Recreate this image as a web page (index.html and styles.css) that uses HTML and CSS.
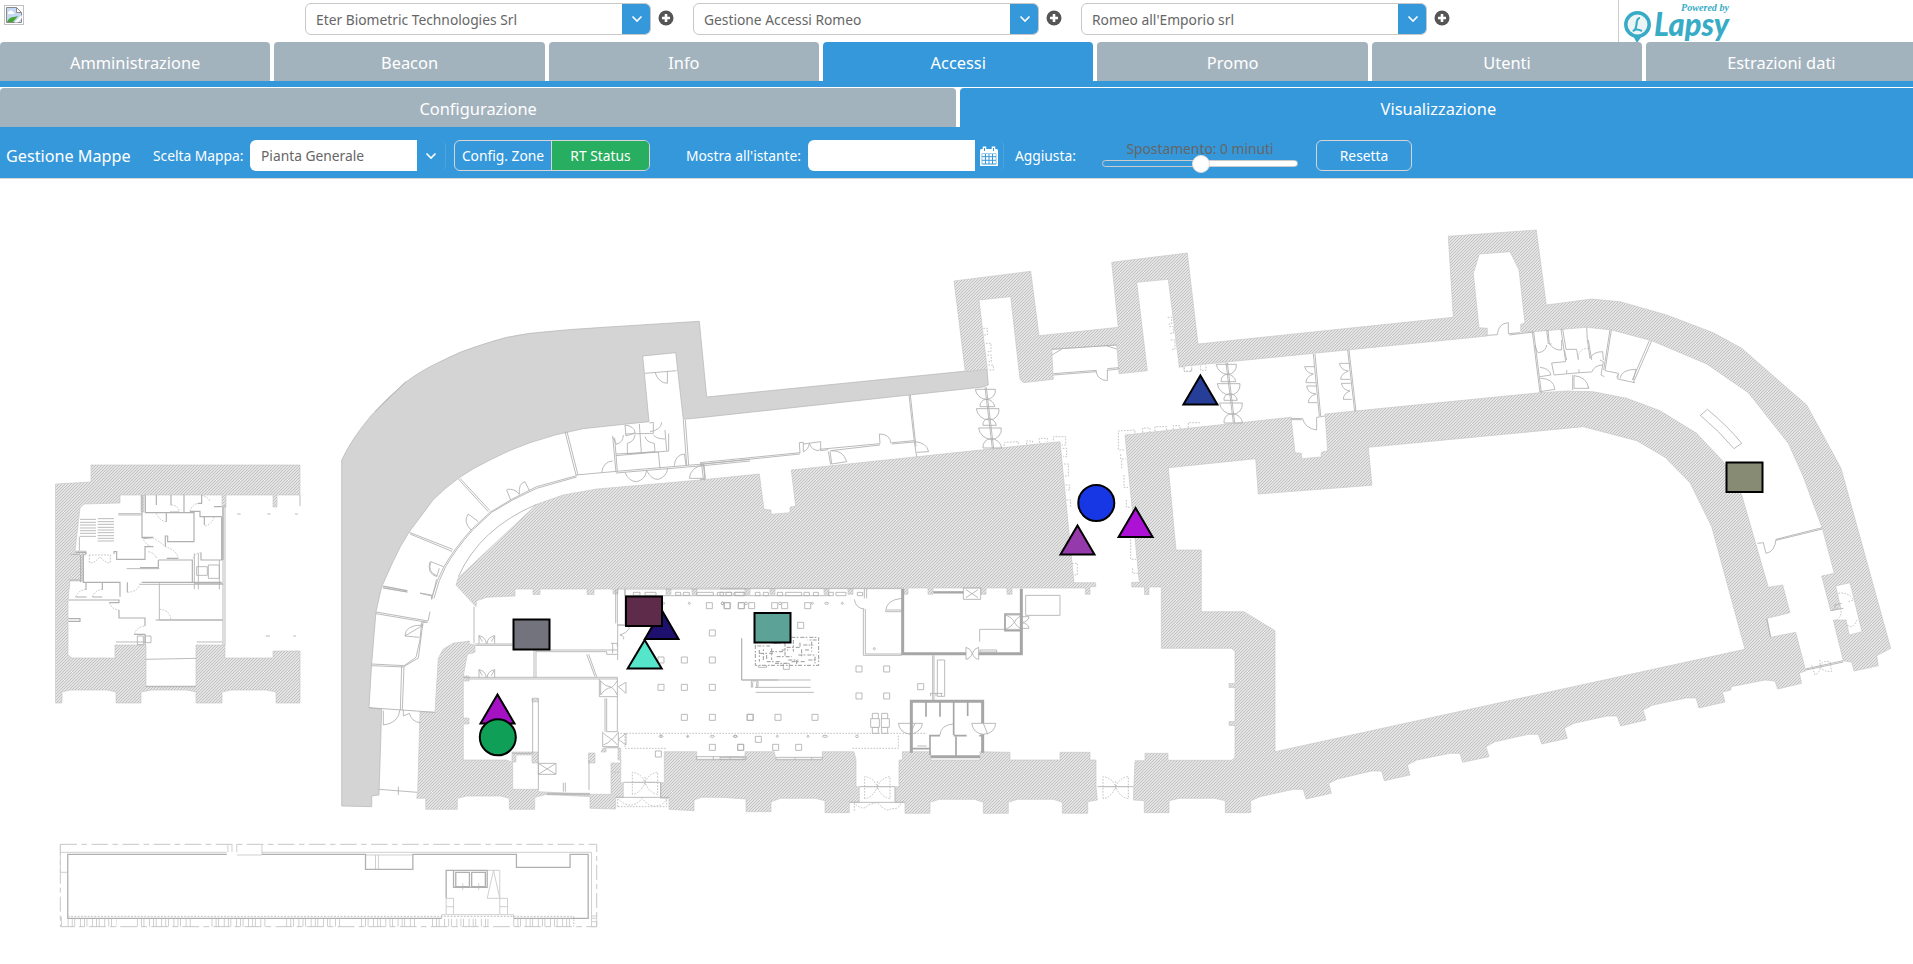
FILE: index.html
```html
<!DOCTYPE html>
<html lang="it">
<head>
<meta charset="utf-8">
<title>Gestione Mappe</title>
<link rel="stylesheet" href="styles.css">
</head>
<body>
<header class="top">
  <div class="brand">
    <svg width="20" height="20" viewBox="0 0 20 20"><rect x=".5" y=".5" width="19" height="19" fill="#fff" stroke="#c0c0c0"/><path d="M2.500 2.500H12.500L17.500 7.500V17.500H2.500Z" fill="#c5d8f5" stroke="#8b8b8b"/><path d="M12.500 2.500V7.500H17.500Z" fill="#fff" stroke="#8b8b8b"/><path d="M4 8Q4 6 6 6Q8 4 9 7Q11 7 10 9H4Z" fill="#fff"/><path d="M3 17Q5 12 10 12L14 11L9 17Z" fill="#48a532"/><path d="M17.500 10L10.500 17.500H13.500L18 13Z" fill="#fff"/></svg>
  </div>
  <div class="pickers">
    <div class="picker"><div class="combo"><span>Eter Biometric Technologies Srl</span><i><svg width="12" height="8" viewBox="0 0 12 8"><path d="M1.500 1.500L6 6L10.500 1.500"/></svg></i></div><svg class="plus" width="16" height="16" viewBox="0 0 16 16"><circle cx="8" cy="8" r="7.500"/><path d="M8 4V12M4 8H12"/></svg></div>
    <div class="picker"><div class="combo"><span>Gestione Accessi Romeo</span><i><svg width="12" height="8" viewBox="0 0 12 8"><path d="M1.500 1.500L6 6L10.500 1.500"/></svg></i></div><svg class="plus" width="16" height="16" viewBox="0 0 16 16"><circle cx="8" cy="8" r="7.500"/><path d="M8 4V12M4 8H12"/></svg></div>
    <div class="picker"><div class="combo"><span>Romeo all'Emporio srl</span><i><svg width="12" height="8" viewBox="0 0 12 8"><path d="M1.500 1.500L6 6L10.500 1.500"/></svg></i></div><svg class="plus" width="16" height="16" viewBox="0 0 16 16"><circle cx="8" cy="8" r="7.500"/><path d="M8 4V12M4 8H12"/></svg></div>
  </div>
  <div class="vendor">
    <svg width="110" height="42" viewBox="0 0 110 42">
      <path d="M8 34L13 43L20 33Z" fill="#38abc6"/><circle cx="13.500" cy="24.500" r="11.700" fill="#edf4f5" stroke="#38abc6" stroke-width="3.500"/>
      <path d="M16 18Q13 18 12.500 24T9 31Q12 28 18 31" fill="none" stroke="#38abc6" stroke-width="2.200"/>
      <text class="logo-name" x="30" y="35.500" textLength="75" lengthAdjust="spacingAndGlyphs">Lapsy</text>
      <text class="logo-by" x="57" y="11" textLength="48" lengthAdjust="spacingAndGlyphs">Powered by</text>
    </svg>
  </div>
</header>
<nav class="tabs"><a>Amministrazione</a><a>Beacon</a><a>Info</a><a class="on">Accessi</a><a>Promo</a><a>Utenti</a><a>Estrazioni dati</a></nav>
<nav class="tabs sub"><a>Configurazione</a><a class="on">Visualizzazione</a></nav>
<section class="tools">
  <h1>Gestione Mappe</h1>
  <label class="l-map">Scelta Mappa:</label>
  <div class="field f-map"><span>Pianta Generale</span><i><svg width="12" height="8" viewBox="0 0 12 8"><path d="M1.500 1.500L6 6L10.500 1.500"/></svg></i></div>
  <div class="switch"><b>Config. Zone</b><b class="go">RT Status</b></div>
  <label class="l-time">Mostra all'istante:</label>
  <div class="field f-time"><span></span><i><svg width="18" height="20" viewBox="0 0 18 20"><rect x="0" y="3" width="18" height="17" rx="1.500" fill="#fff" stroke="none"/><path d="M4.500 .500V5M13.500 .500V5" stroke="#fff" stroke-width="3.500"/><path d="M4.500 2V5M13.500 2V5M1.500 7.500H16.500M1.500 10.700H16.500M1.500 14.300H16.500M1.500 18H16.500M1.700 7.500V18M5.500 7.500V18M9 7.500V18M12.500 7.500V18M16.300 7.500V18" stroke="#3598db" stroke-width="1"/><path d="M0 7H18M1 7V19.500H17V7" stroke-width="1.200"/></svg></i></div>
  <label class="l-adj">Aggiusta:</label>
  <div class="slider"><span>Spostamento: 0 minuti</span><div class="track"><div class="knob"></div></div></div>
  <div class="reset">Resetta</div>
</section>
<main class="map">
<svg width="1913" height="785" viewBox="0 179 1913 785">
<defs>
  <pattern id="h" width="3" height="3" patternUnits="userSpaceOnUse"><rect width="3" height="3" fill="#e4e4e4"/><path d="M-1 1L1 -1M0 3L3 0M2 4L4 2" stroke="#bababa" stroke-width=".8"/></pattern>
  <g id="w"><path d="M-30 0A30 30 0 0 0 30 0ZM-22 52A22 22 0 0 1 22 52ZM-34 58A34 34 0 0 0 34 58ZM-20 108A20 20 0 0 1 20 108ZM-34 116A34 34 0 0 0 34 116ZM-28 176A28 28 0 0 1 28 176Z"/></g>
  <g id="x"><path d="M0 0H52V34H0ZM8 5L44 29M44 5L8 29"/></g>
  <g id="q"><path d="M0 0H18V18H0Z"/></g>
  <g id="v"><path d="M-38 36V-30Q-12 -28 0 0Q12 -28 38 -30V36Q12 32 0 0Q-12 32 -38 36M-38 0H38M0 -16V8"/></g>
  <g id="b"><path d="M2 0V-24Q22 -20 24 0M49 0V-24Q28 -20 26 0M2 -24L12 -6M49 -24L39 -6"/></g>
</defs>

<!-- solid ground -->
<path class="solid" d="M341.700 460Q352 438 371.700 415Q387 398 405 382.700Q420 371 440 361.700Q460 351 483 344.300Q506 336 530 333.300Q570 329 613 326.700L699.300 321.300L706.700 397L987 369L988.300 385L983 387L700 417.700L683.300 419.300L675.700 352.700L642.700 356L649 421.700L626.700 424L583 428.700Q555 434 530 442.700Q509 450 490 460Q473 468 458.300 478.300Q445 488 433 500L409 532.300Q400 546 393 561.700L381.700 586.700L376 611.700L371.700 663L369 707.700L381.700 709.300L379 795L371.700 796V806.700L341.700 806Z"/>

<!-- hatched masonry -->
<g class="mass">
<path d="M536.700 504.300L563 495L597 489L663 483.300L700 480L759.300 474L764 509.300L771 510V514.300L790 512.700V507.300L795.700 506L791.300 470L1060 441.700L1074 582.700H1095.700V586.700H1090V594.300H1085.300V588H1012V594.300H1007V588H986V594.300H981V588H933V594.300H928V588H908V594.300H903V588H853V594.300H848V588H829V594.300H824V588H775V594.300H770V588H750V594.300H745V588H697V594.300H692V588H671V594.300H666V588H618V594H613V589H594V594.500H587V589H540V594.500H533V589H515V596L486.700 597.300L476.700 600.700L476 606.700L466.700 596.700L456 585L458.300 577.700Z"/>
<path d="M475 652.300V645L469.300 644V641L453 643.300L443 649.300L438.300 658.300L435 712.300L420 711.700L417.700 792.300L416.700 798.300H425.700V809.300H457.300V798.300L466.700 796H500.700L509.300 798.300V809.300H534.700V797.300L546.700 794.300L590 796.700V808.300L615.700 809V797.300H623.300V782.700H620.700V772.300H611V794.300H590L538.300 791.700V789.300H512.700V762.300L506.700 760H463.300V724H469V718H463.300V681H469V676H463.300L467.300 654.300Z"/>
<path d="M601 752H606V747H618V760H620.700V763H611V772H620.700V748H603ZM588.500 753H595V763H588.500ZM532 698H538V702H532ZM512 752H538V763H532V755H516V762H512Z"/>
<path d="M664.300 751.700H696.700V760H745V751.700H774.300L776 760H822.300V751.700H854L856 760V786.700H859.300V802.300H849.300V812.700H825V800.700L815 798.300H780.700L771 801.700V811.700H746V799L720 797.300H701.700L694 800V810.700L669 809.300V798.300H660.700V782.700H664.300Z"/>
<path d="M902.300 751.700H930.700V760H980V751.700L1010 752.300V760H1060V752.300H1090V760H1096V786.700L1097.300 800L1087.700 801.700V813.300H1062.300V802.300L1053.300 799.300H1017.700L1008.300 802.300V813.300H983.300V802.300L974.300 799.300H939.300L930 802.300V813.300H905V802.300H895.700V786.700H899V760H902.300Z"/>
<path fill-rule="evenodd" d="M1125 435L1291 417.300L1295 452.700L1301.300 453.300L1302 458.700L1321 457L1321.300 452.300L1327.700 450.700L1325 414L1540 392.700L1566.700 391L1593.300 391.700L1626.700 398.300L1660 410.700L1696.700 433.300L1723.300 461.700L1741.700 495L1768.300 587.300L1782.700 585L1790 612.700L1767.300 618.300L1770.700 637.300L1795.700 632.300L1805.700 670.700L1799.300 673.300L1801.700 683.300L1777.700 689L1775 681L1765 680L1731 686.700V690L1722.300 692L1725 702L1699 708L1696 698H1686L1653 705L1643 710L1646 720L1620.700 726L1617 716H1607L1574 723.300L1564.300 728.300L1567.300 738.300L1541.700 744L1538.300 734.300H1528.300L1495 741.700L1486 746.700L1489 756.700L1462.700 762.300L1460 753.300H1450L1416.700 760L1407.300 765L1410 775L1384.300 780.700L1381.700 771H1371.700L1337.700 779L1328.700 783.300L1331.300 793.300L1306 799L1303.300 789.300H1293.300L1260 796.700L1250.700 800.700V812.700H1225.300V800.700L1214.300 798.300H1179.300L1169 800.700V812.700H1144.300V800.700L1133.300 800L1135 760.700H1145V753.300H1168V760.300H1231.700L1235 757.300V725.500H1229V721.500H1235V687.500H1229V683.500H1235V651.700L1231.700 648.300H1161.300V587H1149V594.500H1144.500V587H1131.700V582.300H1139.300ZM1168.300 467.700L1176 550H1201.300V611.700H1244L1275 630.700V751.700L1745 649.300L1711.700 526.700L1690 482.700L1665 457.300L1636.700 440.700L1583.300 426.700L1368.300 447.300L1372 485.300L1258.300 494L1255.700 458.700Z"/>
<path d="M1179.300 366.700L1168.300 279.300L1136.700 282.300L1147.300 370.700L1119 373.700L1116.700 345L1051.700 349.300L1053.300 379.300L1023.300 382.700L1020 379.300L1010.700 296.700L979 300L987.300 369.300L965.300 371.700L954 281L1030.700 271.300L1039 335.700L1118.300 327.300L1111.700 262.300L1187.300 253L1198 344L1453.300 317.300L1448.300 236.300L1536.300 230L1546.300 305L1591.700 299L1620 301.700L1666.700 315L1713.300 332.700L1741.700 348.300L1806.700 405L1841 468.300L1890.700 648.300L1876.700 655.700L1878.300 665.700L1854 671L1851.700 662.300L1843.300 660.700L1833.300 620H1846L1849.300 635L1862 631.700L1850 582.700L1835.700 586L1840.700 608L1830.700 610.700L1821.700 576L1834.300 573.300L1822.300 528.300L1803.300 476.700L1788.300 443.300L1748.300 392.700L1706.700 364L1651.700 340.700L1611.700 330L1586.700 327.300L1533.300 331.700L1520.700 332.300V324.300L1525 323L1519 270L1510 251.700L1479.300 254L1473.300 273.300L1479 327.700L1487.300 328.300V336Z"/>
<!-- annex -->
<path d="M91 465H300V495H277V507H273V495H226V507H222V495H144V512H141V495H120V503L84 504L80 508L75 551H86V555H83V581H70L68 600V655L72 658H115V645H146V686H196V645H225V658H273V651H300V703H276V692L266 690H231L222 692V703H196V692L187 690H152L141 692V703H116V692L107 690H70L62 692V703H55.500V484L91 482Z"/>
</g>

<!-- curved wing -->
<g class="ln" transform="translate(330 300) scale(.33333)">
<path d="M385 830Q450 685 620 613M135 335L228 245M945 220L1040 212M705 395L738 525M711 395L744 525M738 525L860 514M385 537L475 635M390 535L480 632M238 697L368 748M240 702L366 754M160 858L232 872M160 863L232 876M270 880L305 888M1060 360L1070 495M1066 360L1076 495M860 514L1120 492L1260 478M858 519L1120 497L1260 483M848 408L858 517M854 414L862 514M858 467L1016 453V400M858 462L985 456L990 505M928 372L934 458L892 462V430M934 458L975 455L973 430M885 402L970 400V367L958 369M1005 390L1010 452M305 895L322 842L342 800Q370 750 423 690L480 637L545 598L620 560L740 527M312 895L328 842L347 800Q375 750 428 690L485 637L548 600L620 565L740 531"/>
<path d="M975 217Q985 248 1012 250V215M885 375Q912 378 916 398L888 408ZM995 367Q993 390 960 395M970 405Q980 417 1005 417M915 405Q912 425 892 430M945 410Q950 427 973 430M848 412Q860 430 858 433Q880 428 880 405M815 517Q820 485 848 483M885 517Q895 544 920 545Q945 540 950 512M950 512Q965 540 985 538Q1010 530 1013 505M1033 497Q1035 465 1063 462L1068 495M1078 535Q1082 500 1122 495L1126 535ZM530 570L542 600M530 568Q555 565 568 583Q565 550 585 545L598 572M415 642L445 665M415 642Q398 665 423 690M303 785L340 800M303 785Q290 815 322 828"/>
</g>

<!-- south-west rooms -->
<g class="ln" transform="translate(330 560) scale(.33333)">
<path d="M158 79L232 92M158 84L232 96M270 99L305 105V118L320 58M138 156L294 183L300 155M138 161L292 187M292 187H278M275 187L270 240L258 292L222 317L125 312M279 187L265 294L220 321L125 317M215 318L211 450M222 320L217 450M117 443L315 457M148 688L262 697M205 680V705M432 140V250M436 252H548M436 256H548M612 272V352M618 272V352M610 270H862M618 275H830V283H862M770 283L795 350M776 283L800 350M400 352H862V405M415 357H808M608 415V580M625 415V580M625 610H678V643H625ZM625 610L678 643M678 610L625 643M548 580H605M625 580V690M777 600V690M700 668V695M706 668V695M650 700H780M650 704H780M857 190V88M862 190V88M862 195H885V88M848 250V280M843 250H862V260"/>
<path d="M808 357V410H862M812 362V405M830 415V515H862V405M825 415V515M818 515V560H865V515M808 357H862"/>
<path d="M810 362Q825 380 845 382Q825 385 812 405M862 362Q850 380 845 382Q855 390 862 405M865 380L888 367V400ZM820 520Q840 535 845 538Q835 550 820 555M862 520Q850 538 845 538Q855 545 862 555M865 538L888 520V555ZM280 195L225 228L268 232M225 228Q225 195 278 195M300 5Q290 40 320 50L328 25M160 495Q205 490 210 450M160 452V495M220 450V468L238 460Q245 485 270 488M865 195Q900 195 898 205Q890 220 870 225Q885 228 880 238"/>
<use href="#b" x="445" y="251"/><use href="#b" x="445" y="353"/>
<path d="M1235 235V360H1345M885 88V108M862 87H1250M910 97H930V106H910ZM945 97H978V106H945ZM1037 97H1052V106H1037ZM1060 97H1078V106H1060ZM1100 97H1150V106H1100ZM1162 97H1180V106H1162ZM1188 97H1205V106H1188ZM1212 97H1245V106H1212ZM885 107H1500M993 522V533M1073 527V533M1100 590H1248V598H1100ZM1150 590V598M1200 590V598M880 667H992V712M857 712H1017M863 190V300"/>
<use href="#q" x="1129" y="128"/><use href="#q" x="1182" y="128"/><use href="#q" x="1225" y="128"/><use href="#q" x="1138" y="210"/><use href="#q" x="984" y="291"/><use href="#q" x="1054" y="291"/><use href="#q" x="1138" y="291"/><use href="#q" x="984" y="373"/><use href="#q" x="1054" y="373"/><use href="#q" x="1138" y="373"/><use href="#q" x="1054" y="463"/><use href="#q" x="1138" y="463"/><use href="#q" x="1251" y="463"/><use href="#q" x="1138" y="553"/><use href="#q" x="1223" y="553"/><use href="#q" x="976" y="573"/>
<g class="dash"><path d="M862 520H1790M885 520V565H1010M863 740V715Q885 738 905 735Q925 730 937 715Q950 735 970 738Q1000 740 1010 715V740Z"/><use href="#v" x="945" y="667"/></g>
<circle cx="1001" cy="130" r="3"/><circle cx="1078" cy="130" r="3"/><circle cx="1178" cy="130" r="4"/><ellipse cx="993" cy="529" rx="6" ry="3"/><circle cx="1073" cy="529" r="3"/><ellipse cx="1147" cy="529" rx="6" ry="3"/><ellipse cx="1216" cy="529" rx="6" ry="3"/>
</g>

<!-- central hall -->
<g class="ln" transform="translate(720 560) scale(.33333)">
<path d="M0 97H35V107H0ZM45 97H72V107H45ZM106 97H120V107H106ZM130 97H145V107H130ZM172 97H188V107H172ZM197 97H245V107H197ZM252 97H268V107H252ZM280 97H295V107H280ZM326 97H340V107H326ZM348 97H378V107H348ZM412 97H428V107H412ZM0 86H545M433 86V115M440 86V115M430 147V286H545M436 147V282H545M403 118Q407 145 433 147M65 235V360H272M105 382H272M107 397H282M94 363H114V383M94 363V383M98 367V383M110 367V383"/>
<path d="M545 115Q497 120 497 155M545 155H497M545 150H500M638 286V420M642 286V420M652 300H674V409H652ZM630 400H668M632 400V409M648 400V409M664 400V409M917 106H1020V166H917ZM779 245V208H855M780 270H830V276H780ZM592 558H620M640 95H730M640 99H730M418 680H525V727M388 727H555M1132 680H1240M0 592H72V598H0ZM168 592H307V598H168ZM225 592V598M275 592V598"/>
<use href="#x" x="730" y="84"/>
<path d="M857 165Q880 175 883 187Q875 200 857 208M905 165Q885 178 883 187Q890 200 905 208M855 165H905V208H855ZM905 170H927Q925 185 905 188Q925 190 927 205H905M738 262Q752 265 757 280Q752 296 738 298ZM776 262Q762 265 757 280Q762 296 776 298ZM535 490H607Q605 515 572 523Q540 520 535 490M570 523L585 490M755 490H827Q825 520 790 523Q760 520 755 490M790 490L803 523M660 525Q662 495 700 492"/>
<use href="#q" x="13" y="128"/><use href="#q" x="55" y="128"/><use href="#q" x="86" y="128"/><use href="#q" x="155" y="128"/><use href="#q" x="185" y="128"/><use href="#q" x="254" y="128"/><use href="#q" x="233" y="187"/><use href="#q" x="408" y="318"/><use href="#q" x="491" y="318"/><use href="#q" x="408" y="399"/><use href="#q" x="491" y="399"/><use href="#q" x="593" y="371"/><use href="#q" x="82" y="463"/><use href="#q" x="165" y="463"/><use href="#q" x="276" y="463"/><use href="#q" x="106" y="529"/><use href="#q" x="53" y="553"/><use href="#q" x="158" y="553"/><use href="#q" x="227" y="553"/><use href="#q" x="457" y="460"/><use href="#q" x="485" y="460"/><use href="#q" x="457" y="502"/><use href="#q" x="485" y="502"/><use href="#q" x="190" y="310"/>
<path class="paper" d="M452 476H478V502H452ZM484 476H508V502H484Z"/>
<path d="M115 315V322H140V315"/>
<circle cx="8" cy="130" r="4"/><circle cx="78" cy="130" r="4"/><circle cx="180" cy="130" r="4"/><circle cx="277" cy="130" r="3"/><ellipse cx="320" cy="130" rx="6" ry="3"/><circle cx="367" cy="130" r="3"/><ellipse cx="46" cy="529" rx="6" ry="3"/><circle cx="172" cy="529" r="3"/><circle cx="264" cy="529" r="3"/><ellipse cx="315" cy="529" rx="8" ry="3"/><circle cx="411" cy="529" r="4"/><circle cx="463" cy="266" r="3"/>
<g class="dash"><path d="M397 565H535V523M403 752V730Q430 755 445 735L472 727Q500 760 515 745Q535 750 542 730"/><use href="#v" x="472" y="680"/><use href="#v" x="1187" y="680"/></g>
<path class="rough" d="M106 232H296V316H106ZM112 258H150M160 250H185M200 262H240M220 240V275M250 255H280M120 280H160M170 290H215M185 270H205M235 285H290M130 300V268M265 300H290M140 305H180M215 305H255M245 268V290M275 245V275M155 265V300M290 240H262M195 248V290M230 300V312M118 270V305M115 245H140M150 275H190M205 300H235M255 270H270M165 310H200M240 248V262M285 290V310M140 285V300"/>
<path class="wall" d="M548 86V281H738M776 281H904V86M574 578V424H788V490M788 523V578M632 590H780"/>
<path class="wall2" d="M855 160V212H905M855 162H905M618 424V470M660 424V470M701 424V525M743 424V468M660 527H630V585M576 566H630M701 527H740M708 530V588M640 97H730M778 527H788"/>
</g>

<!-- upper corridor -->
<g class="ln" transform="translate(700 260) scale(.33333)">
<path d="M0 608L300 578M0 613L300 582M627 405L643 545L650 590M631 405L648 560M358 568L540 551M300 580L298 548L310 547V575M310 552L362 545V572L385 569M385 575L392 614M390 573L395 612M392 572L540 555M575 548L643 542M575 552L643 546M0 612H10L15 658H0M5 615L10 655M1060 341L1190 331M1060 345L1190 335M1222 326L1255 323V327L1222 331M1055 268L1250 255M1055 285L1085 268M1250 267L1215 256"/>
<path d="M310 575Q325 570 328 550Q335 572 358 572M392 572Q430 570 440 605L395 612M540 551L538 522Q570 522 573 550M645 545Q680 548 686 575L650 577M1188 333Q1192 360 1222 362V328"/>
<path d="M855 382L877 565M859 382L881 565"/>
<use href="#w" transform="translate(856 388) skewX(6.800)"/>
<g class="dash"><path d="M850 205H862V225H852M858 250H873V275H860M862 285H874V305H864M865 315H880V330H865M1403 172H1415V192H1405M1408 200H1420V220H1408M1412 240H1425V268H1415M1436 321H1452V333H1475V320M912 558L914 547L955 545V556M980 553V543H998V551M1018 548V535H1042V545M1060 541V530H1097V555H1085M1088 565H1100V590H1090M1092 612H1105V648H1095M1097 675H1109V690H1098M1100 720H1112V740M1116 910H1132V945H1120M1255 568V513L1305 510V523M1258 570H1275M1262 583V597H1277M1265 625V597M1272 645V682H1284M1279 720V742H1291M1292 838V898H1308M1298 925V940H1315M1328 518V504H1350V516M1365 514V500H1400V511M1420 509V497H1440V507M1465 503V488H1500"/></g>
</g>
<g class="ln" transform="translate(1100 220) scale(.33333)">
<path d="M378 428L400 608M382 428L404 608M640 402L658 588M645 402L662 588M743 390L764 574M747 390L768 574"/>
<use href="#w" transform="translate(379 433) skewX(6.800)"/>
<path d="M614 440H645M614 440Q620 460 640 462Q618 470 618 488H648M620 498H650M620 498Q622 520 648 522Q625 530 625 548H652M718 430H748M718 430Q722 450 745 453Q722 462 722 478H750M724 490H752M724 490Q728 510 750 513Q730 520 730 538H755M573 595L608 596Q615 625 650 630V592L675 588M1162 346L1192 344Q1195 310 1225 308V341L1260 338M1228 345L1300 336M573 599H605"/>
<g class="dash"><path d="M253 442V455H275V442M302 437V451H318V435"/></g>
</g>

<!-- east wing -->
<g class="ln" transform="translate(1500 280) scale(.33333)">
<path d="M97 155L120 338M101 155L124 338M140 150L145 192M144 150L148 192H155M183 147L197 245L155 249L162 285L240 278L275 276M188 147L198 208H230L235 240M193 210L200 240M260 142L262 180L270 235M265 180L275 240M334 150L315 272M330 150L311 270M315 272L355 280L353 297L405 308M355 283L350 292M455 182L400 308M448 182L397 300M218 285V330M222 287V325M120 335L165 328M222 325H266V320M200 270V280M237 268V278M300 240L310 245L303 285L313 290M603 405L622 388Q685 440 725 490L702 506Q660 455 600 405M772 790L790 788L798 820Q825 815 828 778L967 743M828 781L967 747M917 1167L1030 1142M918 1170L1030 1146M800 1017L812 1072M1005 985V975L1025 970M992 992L1030 985"/>
<path d="M105 195Q112 220 115 218Q138 215 140 195M148 192Q165 212 185 210V180M120 262Q148 265 153 285L120 290M122 295Q160 295 165 328M222 287Q260 290 266 325M270 235Q280 215 308 215L310 240M275 276Q285 255 308 255M360 295Q365 268 408 268L400 300"/>
<g class="dash"><path d="M235 235Q235 205 265 205M935 1155L945 1185Q958 1180 962 1160Q968 1175 995 1175L990 1145Q965 1140 960 1160M960 1140V1165M1015 940Q1045 935 1060 960L1045 965M1010 1020Q1030 1005 1020 985M1042 1035Q1060 1050 1070 1020"/></g>
</g>

<!-- annex rooms -->
<g class="ln" transform="translate(40 450) scale(.33333)">
<path d="M120 208H168M120 217H168M120 225H168M120 234H168M120 242H168M120 250H168M120 259H168M173 206H222M173 215H222M173 223H222M173 232H222M173 240H222M173 248H222M173 257H222M173 265H222M173 273H222M235 191H305M235 195H305M118 260V302M555 165V585M549 170V585M317 628L468 625M317 710H468M228 576H315M470 576H548M358 400V510H548M463 310V418M475 310V418M463 400H548M505 345H538V385H505ZM470 350H502V376H470ZM538 330V418M260 356H358M292 558H310V584H292ZM316 558H333V578H316ZM300 403H550M92 313H120M88 390H122M780 135V168"/>
<path class="wall3" d="M306 135V262H340M316 135V188H462V275H383V258H376V290M349 135V165M393 135V165M432 135V188M390 186H418M450 184H480V200H545M473 160H485V135M349 190V188H379V215M493 200V225M522 170H545M545 200V330H483V308M355 330H457V397H305M305 397H545M310 265L338 263M340 290H315V328H230V305H222V312M107 307H138V312M130 312V397H240V440M122 315V397M355 330V353H300M380 325H415M138 397V420M187 397V420M85 450H237V458H208M107 441H140M157 441H187M237 480V504H315V528M315 585V553H283M85 506H120V514H85M262 397V427M347 510H548M549 170V330"/>
<g class="dash"><path d="M349 190Q358 212 379 215M393 165Q415 165 418 186M450 184Q455 165 473 160M483 135Q505 140 510 155M522 200Q515 225 493 228M306 262Q320 290 340 290M338 263Q360 275 376 290Q410 300 415 325M325 305Q345 310 350 325M460 325Q465 308 483 308M107 441Q115 420 138 418M157 441Q165 420 187 418M208 458Q215 478 237 480M262 427Q295 425 300 400M358 478Q390 480 392 508M283 553Q290 530 315 528M148 315V338Q165 340 180 320Q195 340 211 338V315Z"/></g>
<path d="M592 192H602M682 192H692M765 192H774M677 558H690M760 558H768"/>
</g>

<!-- lower section strip -->
<g class="ln faint" transform="translate(40 830) scale(.36990 .33333)">
<path class="long" d="M55 43H1505V290H55Z"/>
<path d="M55 43V127H75M55 67H505M532 67V43M600 43V73M600 67H1491V265M532 75H600M508 43V66M519 43V66M58 260V290M907 75V118M915 75V118M880 75H1008M1098 205V252M1118 205V252M1243 205V252M1264 205V252M1098 205H1118M1098 230H1118M1243 205H1264M1243 230H1264M1209 121H1243V205L1226 121L1209 205H1243M1086 265V254H1280V265M1491 258H1505V290H1491ZM1491 265H1505M1491 275H1505M1143 160V180M1186 160V180"/>
<path class="wall3" d="M505 73H75V265H1086M600 73H880V118H1008V73H1288V112H1433V73H1482V265H1280M1098 205V121H1209V172H1118V121M1124 127H1161V170H1124ZM1167 127H1204V170H1167Z"/>
<path class="dash" d="M75 259H1443V290"/>
<path class="teeth" d="M75 278H208M262 278H410M464 278H612M666 278H815M868 278H1018M1060 278H1212M1280 278H1443"/>
</g>

<!-- live markers -->
<g class="mk">
<path fill="#1e106e" d="M661.700 610L678.500 639H644.900Z"/>
<rect x="626" y="596.500" width="36" height="29.500" fill="#5f2b4b"/>
<path fill="#55e5cb" d="M644.700 640L661.700 668.500H627.700Z"/>
<rect x="513.500" y="619.500" width="36" height="30" fill="#73737d"/>
<path fill="#a512c4" d="M497.500 694.500L514.500 723.500H480.500Z"/>
<circle cx="497.800" cy="737.300" r="18" fill="#0f9f56"/>
<rect x="754.500" y="613" width="36" height="29.500" fill="#5ca296"/>
<circle cx="1096.300" cy="503" r="18" fill="#1736e4"/>
<path fill="#953aaa" d="M1077.500 525.500L1094.500 554.500H1060.500Z"/>
<path fill="#ac12d3" d="M1135.600 508L1152.600 537H1118.600Z"/>
<path fill="#273e99" d="M1200.400 375.500L1217.400 404.500H1183.400Z"/>
<rect x="1726.500" y="462.500" width="36" height="29.500" fill="#888b74"/>
</g>
</svg>
</main>
</body>
</html>
```
FILE: styles.css
```css
* { box-sizing: border-box; }
body { margin: 0; background: #fff; font-family: "Noto Sans", "Open Sans", sans-serif; font-size: 13.8px; color: #666; overflow: hidden; white-space: nowrap; }
.top { display: flex; height: 42px; overflow: hidden; }
.brand { width: 305px; padding: 5px 0 0 4px; }
.pickers { display: flex; gap: 42px; padding-top: 3px; width: 1313px; }
.picker { display: flex; gap: 7px; width: 346px; }
.combo { display: flex; flex: none; width: 346px; height: 32px; border: 1px solid #c8c8c8; border-radius: 6px; overflow: hidden; line-height: 31px; padding-left: 10px; }
.combo span { flex: 1; }
.combo i { width: 29px; background: #3598db; margin: -1px; }
i { display: flex; align-items: center; justify-content: center; }
i svg { fill: none; stroke: #fff; stroke-width: 1.6; }
.plus { flex: none; margin-top: 7px; fill: #555; stroke: #fff; stroke-width: 2.6; }
.plus circle { stroke: none; }
.vendor { border-left: 1px solid #ccc; padding-left: 5px; }
.logo-name { font: italic 900 32px Lato, sans-serif; fill: #38abc6; }
.logo-by { font: italic bold 10.5px "Liberation Serif", serif; fill: #38abc6; }
.tabs { display: flex; gap: 4px; width: 1916.5px; height: 45px; border-bottom: 6px solid #3598db; }
.tabs a { flex: 1; background: #a3b3be; color: #fff; font-size: 16.4px; line-height: 42px; text-align: center; border-radius: 4px 4px 0 0; }
.tabs .on { background: #3598db; }
.sub { margin-top: 1px; height: 39px; border-bottom: 0; }
.tools { display: flex; align-items: center; height: 52px; padding: 10px 0 4px 6px; background: #3598db; border-bottom: 1px solid #d5d5d5; color: #fff; }
.tools h1 { width: 147px; margin: 0; font-size: 16.2px; font-weight: 400; }
.l-map { width: 97px; }
.field { display: flex; width: 196px; height: 31px; border-radius: 6px; line-height: 31px; color: #666; }
.field span { width: 167px; padding-left: 11px; background: #fff; border-radius: 6px 0 0 6px; }
.field i { width: 29px; border-radius: 0 6px 6px 0; border-right: 1px solid #4ba4e0; }
.switch { display: flex; width: 196px; height: 31px; margin-left: 8px; border: 1px solid #d5d5d5; border-radius: 6px; overflow: hidden; line-height: 29px; text-align: center; }
.switch b { width: 97px; font-weight: 400; border-right: 1px solid #d5d5d5; }
.switch .go { flex: 1; background: #27ae60; border: 0; }
.l-time { width: 122px; margin-left: 36px; }
.l-adj { width: 87px; margin-left: 11px; }
.slider { width: 196px; text-align: center; color: #666; line-height: 18px; margin-top: -4px; }
.slider span { display: block; }
.track { height: 7px; margin-top: 2px; border: 1px solid #ccc; border-radius: 4px; background: linear-gradient(90deg, transparent 50%, #fff 50%); position: relative; }
.knob { position: absolute; left: 89px; top: -6px; width: 18px; height: 18px; border-radius: 50%; background: #fff; border: 1px solid #ddd; }
.reset { width: 96px; height: 31px; margin-left: 18px; border: 1px solid #d5d5d5; border-radius: 6px; text-align: center; line-height: 29px; }
.map svg { display: block; }
.solid { fill: #d4d4d4; stroke: #b5b5b5; stroke-width: .7; }
.mass { fill: url(#h); stroke: #c4c4c4; stroke-width: .6; }
.ln { fill: none; stroke: #b0b0b0; stroke-width: 2.6; }
.faint { stroke: #ccc; }
.dash { stroke-dasharray: 5 4; stroke: #bbb; }
.long { stroke-dasharray: 45 12 15 12; stroke: #c2c2c2; }
.wall { stroke: #a6a6a6; stroke-width: 9; }
.wall2 { stroke: #a6a6a6; stroke-width: 5; }
.wall3 { stroke: #b0b0b0; stroke-width: 3.5; }
.paper { fill: #fff; }
.rough { stroke-dasharray: 12 4 5 6; stroke: #999; stroke-width: 3; }
.teeth { stroke-width: 24; stroke-dasharray: 2 9 2 5 2 13; stroke: #c0c0c0; }
.mk { stroke: #000; stroke-width: 2; }
```
